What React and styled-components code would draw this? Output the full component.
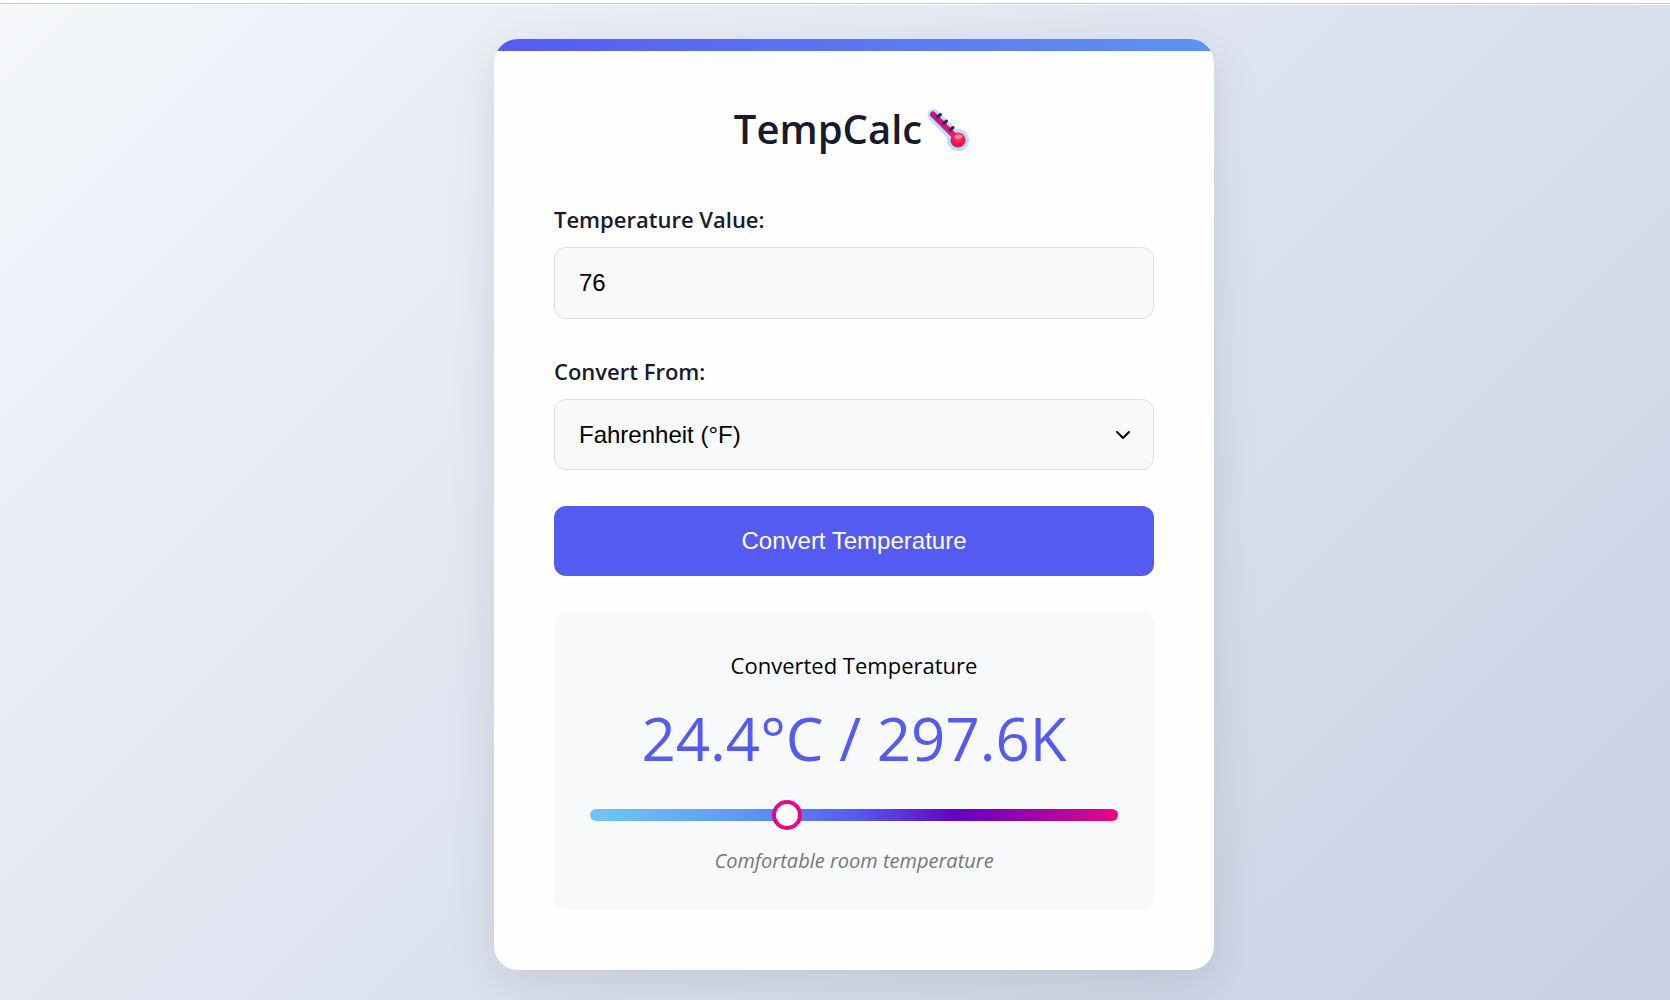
import React, { useId, useState } from "react";
import styled, { createGlobalStyle } from "styled-components";

const GlobalStyle = createGlobalStyle`
  *, *::before, *::after { box-sizing: border-box; }
  body {
    margin: 0;
    background: #fff;
    font-family: "Open Sans", "Noto Sans", sans-serif;
    color: #000;
  }
`;

const Page = styled.div`
  min-height: 100vh;
  display: flex;
  flex-direction: column;
  overflow: hidden;
`;

const TopRule = styled.header`
  height: 5px;
  border-top: 3px solid #fff;
  border-bottom: 1px solid #fff;
  background: #c8c8c8;
`;

const Stage = styled.main`
  flex: 1;
  display: flex;
  justify-content: center;
  align-items: flex-start;
  padding: 34px 0 30px 38px;
  background: linear-gradient(135deg, #f5f7f9 0%, #ebeff7 18%, #c7d0e3 100%);
`;

const Card = styled.section`
  width: 100%;
  max-width: 720px;
  border-radius: 24px;
  overflow: hidden;
  background: #fefefe;
  box-shadow: 0 12px 48px rgba(0, 0, 0, 0.1);
`;

const Accent = styled.div`
  height: 12px;
  background: linear-gradient(90deg, #555bf2, #5f93ef);
`;

const Content = styled.div`
  display: flex;
  flex-direction: column;
  gap: 36px;
  padding: 48px 60px 60px;
`;

const Title = styled.h1`
  display: flex;
  justify-content: center;
  align-items: center;
  gap: 4px;
  margin: 0 0 8px;
  padding-right: 4px;
  font-size: 40px;
  line-height: 60px;
  font-weight: 600;
  color: #1a1a2e;
`;

const Form = styled.form`
  display: flex;
  flex-direction: column;
  gap: 36px;
`;

const Field = styled.div`
  display: flex;
  flex-direction: column;
  gap: 12px;
`;

const Label = styled.label`
  font-size: 22px;
  line-height: 32px;
  font-weight: 600;
  color: #1a1a2e;
`;

const controlFont = `
  font-family: "Liberation Sans", Arial, sans-serif;
  font-size: 24px;
  line-height: 28px;
`;

const Input = styled.input`
  ${controlFont}
  width: 100%;
  height: 72px;
  padding: 0 24px;
  border: 1px solid #e0e0e0;
  border-radius: 12px;
  background: #f8f9fb;
  color: #000;
`;

const SelectBox = styled.div`
  display: grid;
  align-items: center;
  > * { grid-area: 1 / 1; }
`;

const Select = styled.select`
  ${controlFont}
  appearance: none;
  width: 100%;
  height: 71px;
  padding: 0 56px 0 24px;
  border: 1px solid #e0e0e0;
  border-radius: 12px;
  background: #f8f9fb;
  color: #000;
`;

const Chevron = styled.svg`
  justify-self: end;
  margin-right: 22px;
  pointer-events: none;
`;

const Button = styled.button`
  ${controlFont}
  height: 70px;
  border: 0;
  border-radius: 12px;
  background: #555bf2;
  color: #fff;
  cursor: pointer;
`;

const Result = styled.section`
  display: flex;
  flex-direction: column;
  align-items: center;
  padding: 36px;
  border-radius: 12px;
  background: #f8f9fb;
`;

const ResultTitle = styled.h2`
  margin: 0;
  font-size: 22px;
  line-height: 34px;
  font-weight: 400;
`;

const ResultValue = styled.output`
  margin: 12px 0 26px;
  font-size: 60px;
  line-height: 89px;
  color: #555bf2;
`;

const Scale = styled.div`
  position: relative;
  width: 100%;
  height: 12px;
  border-radius: 6px;
  background: linear-gradient(90deg, #70c8f1 0%, #6195ef 30%, #555bf2 50%, #6200c4 70%, #e60883 100%);
`;

const Range = styled.input`
  position: absolute;
  top: -9px;
  left: -15px;
  width: calc(100% + 30px);
  height: 30px;
  margin: 0;
  appearance: none;
  background: transparent;
  &::-webkit-slider-thumb {
    appearance: none;
    width: 30px;
    height: 30px;
    border: 4px solid #e60883;
    border-radius: 50%;
    background: #fff;
  }
`;

const Note = styled.p`
  margin: 27px 0 0;
  font-size: 20px;
  line-height: 26px;
  font-style: italic;
  color: #777;
`;

function Thermometer() {
  return (
    <svg width="44" height="44" viewBox="0 0 44 44" aria-hidden="true">
      <defs>
        <radialGradient id="bulb" cx="0.5" cy="0.35" r="0.65">
          <stop offset="0" stopColor="#ff4b70" />
          <stop offset="0.5" stopColor="#f01c55" />
          <stop offset="1" stopColor="#d9134e" />
        </radialGradient>
        <linearGradient id="tube" x1="0" y1="0" x2="1" y2="1">
          <stop offset="0" stopColor="#c5108f" />
          <stop offset="1" stopColor="#e31a68" />
        </linearGradient>
      </defs>
      <path d="M7.5 8 29 30" stroke="#bcdcff" strokeWidth="12" strokeLinecap="round" />
      <circle cx="32" cy="33" r="11" fill="#bcdcff" />
      <path d="m7 7.500 22 22" stroke="url(#tube)" strokeWidth="6" strokeLinecap="round" />
      <circle cx="32" cy="33" r="7.5" fill="url(#bulb)" />
      <ellipse cx="32.5" cy="29.5" rx="4" ry="2.2" fill="#ff9bb0" opacity="0.75" />
      <path d="m11.500 10 3-2.500M17.500 16.500l3-2.500M24 23l3-2.500" stroke="#35254f" strokeWidth="3" strokeLinecap="round" />
    </svg>
  );
}

function convert(value, unit) {
  const celsius =
    unit === "F" ? ((value - 32) * 5) / 9 : unit === "K" ? value - 273.15 : value;
  const parts = {
    C: `${celsius.toFixed(1)}°C`,
    F: `${((celsius * 9) / 5 + 32).toFixed(1)}°F`,
    K: `${(celsius + 273.15).toFixed(1)}K`,
  };
  const text = Object.keys(parts).filter((key) => key !== unit).map((key) => parts[key]).join(" / ");
  return { celsius, text };
}

function describe(celsius) {
  if (celsius < 0) return "Freezing cold";
  if (celsius < 18) return "Cool temperature";
  if (celsius < 27) return "Comfortable room temperature";
  return "Hot temperature";
}

export default function App() {
  const valueId = useId();
  const unitId = useId();
  const [value, setValue] = useState("76");
  const [unit, setUnit] = useState("F");
  const [result, setResult] = useState(() => convert(76, "F"));

  const submit = (event) => {
    event.preventDefault();
    setResult(convert(Number(value), unit));
  };

  return (
    <>
      <GlobalStyle />
      <Page>
        <TopRule />
        <Stage>
          <Card>
            <Accent />
            <Content>
              <Title>TempCalc <Thermometer /></Title>
              <Form onSubmit={submit}>
                <Field>
                  <Label htmlFor={valueId}>Temperature Value:</Label>
                  <Input id={valueId} inputMode="decimal" value={value} onChange={(e) => setValue(e.target.value)} />
                </Field>
                <Field>
                  <Label htmlFor={unitId}>Convert From:</Label>
                  <SelectBox>
                    <Select id={unitId} value={unit} onChange={(e) => setUnit(e.target.value)}>
                      <option value="C">Celsius (°C)</option>
                      <option value="F">Fahrenheit (°F)</option>
                      <option value="K">Kelvin (K)</option>
                    </Select>
                    <Chevron width="18" height="12" viewBox="0 0 18 12" fill="none" aria-hidden="true">
                      <path d="m3 3 6 6 6-6" stroke="#000" strokeWidth="2" strokeLinecap="round" strokeLinejoin="round" />
                    </Chevron>
                  </SelectBox>
                </Field>
                <Button type="submit">Convert Temperature</Button>
              </Form>
              <Result>
                <ResultTitle>Converted Temperature</ResultTitle>
                <ResultValue>{result.text}</ResultValue>
                <Scale>
                  <Range type="range" min="-50" max="150" step="any" value={result.celsius} readOnly aria-label="Temperature scale" />
                </Scale>
                <Note>{describe(result.celsius)}</Note>
              </Result>
            </Content>
          </Card>
        </Stage>
      </Page>
    </>
  );
}
